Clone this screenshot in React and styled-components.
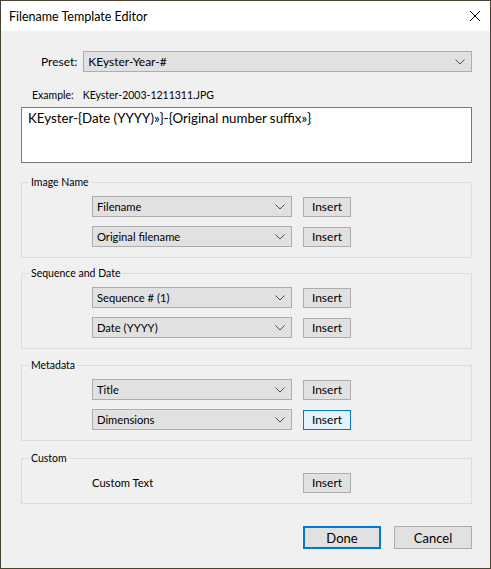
import React from 'react';
import styled, { createGlobalStyle } from 'styled-components';

const GlobalStyle = createGlobalStyle`
  html, body {
    margin: 0;
    padding: 0;
    background: #f0f0f0;
  }
  * {
    box-sizing: border-box;
  }
`;

const Window = styled.div`
  width: 491px;
  height: 569px;
  display: flex;
  flex-direction: column;
  border: 1px solid #4b4331;
  background: #f0f0f0;
  font-family: Lato, 'Noto Sans', sans-serif;
  font-size: 12px;
  color: #000;
`;

const TitleBar = styled.div`
  height: 30px;
  display: flex;
  align-items: center;
  justify-content: space-between;
  background: #fff;
  padding: 0 9px 0 8px;
  font-size: 12.5px;
`;

const CloseButton = styled.div`
  width: 12px;
  height: 12px;
  display: flex;
`;

const Body = styled.div`
  flex: 1;
  padding: 20px 18px 0 20px;
  display: flex;
  flex-direction: column;
`;

const LabelRow = styled.div`
  display: flex;
  align-items: center;
  gap: ${(p) => p.gap || 6}px;
  padding-left: ${(p) => p.indent}px;
  margin-top: ${(p) => p.top || 0}px;
  font-size: ${(p) => p.size || 12}px;
  line-height: 14px;
`;

const SelectBox = styled.div`
  width: ${(p) => (p.wide ? '390px' : '200px')};
  height: 21px;
  display: flex;
  align-items: center;
  justify-content: space-between;
  padding: 0 6px 0 4px;
  background: #e1e1e1;
  border: 1px solid #adadad;
  font-size: ${(p) => (p.wide ? 12 : 11.2)}px;
`;

const TemplateText = styled.div`
  margin-top: 5px;
  height: 56px;
  background: #fff;
  border: 1px solid #7a7a7a;
  padding: 2px 6px;
  font-size: 13.3px;
  line-height: 17px;
`;

const Group = styled.fieldset`
  margin: ${(p) => p.top}px 0 0;
  padding: 0;
  border: 1px solid #dcdcdc;
  min-width: 0;
`;

const Legend = styled.legend`
  margin-left: 7px;
  padding: 0 2px;
  font-size: 10.5px;
  line-height: 14px;
`;

const GroupBody = styled.div`
  display: flex;
  flex-direction: column;
  gap: 9px;
  padding: 7px 0 10px 70px;
`;

const ItemRow = styled.div`
  display: flex;
  align-items: center;
  gap: 11px;
  height: 21px;
`;

const ItemLabel = styled.div`
  width: 200px;
  font-size: 11.2px;
`;

const Button = styled.div`
  width: ${(p) => p.w}px;
  height: ${(p) => p.h}px;
  display: flex;
  align-items: center;
  justify-content: center;
  background: ${(p) => (p.hover ? '#e5f1fb' : '#e1e1e1')};
  border: ${(p) => (p.focus ? '2px solid #0078d7' : p.hover ? '1px solid #0078d7' : '1px solid #adadad')};
  font-size: ${(p) => p.size || 12}px;
`;

const Footer = styled.div`
  margin-top: 22px;
  display: flex;
  gap: 13px;
  padding-left: 282px;
`;

function Chevron() {
  return (
    <svg width="10" height="6" viewBox="0 0 10 6">
      <path d="M0.5 0.5 L5 5 L9.5 0.5" fill="none" stroke="#505050" strokeWidth="1" />
    </svg>
  );
}

function Select({ value, wide }) {
  return (
    <SelectBox wide={wide}>
      <span>{value}</span>
      <Chevron />
    </SelectBox>
  );
}

const groups = [
  { name: 'Image Name', top: 12, items: ['Filename', 'Original filename'] },
  { name: 'Sequence and Date', top: 8, items: ['Sequence # (1)', 'Date (YYYY)'] },
  { name: 'Metadata', top: 9, items: ['Title', 'Dimensions'], hover: 1 },
];

export default function App() {
  return (
    <>
      <GlobalStyle />
      <Window>
        <TitleBar>
          <span>Filename Template Editor</span>
          <CloseButton>
            <svg width="12" height="12" viewBox="0 0 12 12">
              <path d="M1 1 L11 11 M11 1 L1 11" stroke="#000" strokeWidth="1" />
            </svg>
          </CloseButton>
        </TitleBar>
        <Body>
          <LabelRow indent={20}>
            <span>Preset:</span>
            <Select wide value="KEyster-Year-#" />
          </LabelRow>
          <LabelRow indent={11} top={16} gap={9} size={10.5}>
            <span>Example:</span>
            <span>KEyster-2003-1211311.JPG</span>
          </LabelRow>
          <TemplateText>KEyster-{'{'}Date (YYYY)»{'}'}-{'{'}Original number suffix»{'}'}</TemplateText>

          {groups.map((g) => (
            <Group key={g.name} top={g.top}>
              <Legend>{g.name}</Legend>
              <GroupBody>
                {g.items.map((item, i) => (
                  <ItemRow key={item}>
                    <Select value={item} />
                    <Button w={48} h={20} hover={g.hover === i}>Insert</Button>
                  </ItemRow>
                ))}
              </GroupBody>
            </Group>
          ))}

          <Group top={10}>
            <Legend>Custom</Legend>
            <GroupBody>
              <ItemRow>
                <ItemLabel>Custom Text</ItemLabel>
                <Button w={48} h={20}>Insert</Button>
              </ItemRow>
            </GroupBody>
          </Group>

          <Footer>
            <Button w={78} h={23} size={13} focus>Done</Button>
            <Button w={78} h={23} size={13}>Cancel</Button>
          </Footer>
        </Body>
      </Window>
    </>
  );
}
